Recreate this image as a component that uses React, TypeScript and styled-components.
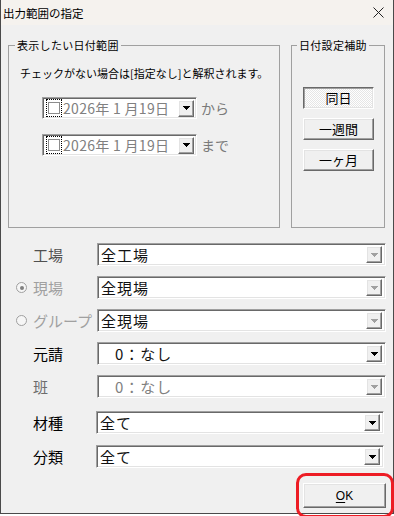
import React from "react";
import styled, { createGlobalStyle, css } from "styled-components";

const GlobalStyle = createGlobalStyle`
  html, body { margin: 0; padding: 0; background: #ffffff; }
  body { font-family: "Noto Sans CJK JP", "Noto Sans", sans-serif; color: #000; }
  * { box-sizing: border-box; }
`;

const Stage = styled.div`
  position: relative;
  width: 394px;
  height: 516px;
  overflow: hidden;
`;

const Window = styled.div`
  width: 394px;
  height: 514px;
  display: flex;
  flex-direction: column;
  border: 1px solid #4a4a4a;
  border-top: none;
  background: #f0f0f0;
`;

const TitleBar = styled.div`
  height: 25px;
  flex: none;
  display: flex;
  align-items: center;
  justify-content: space-between;
  padding: 0 9px 0 2px;
  background: #f5f2ee;
`;

const Title = styled.span`
  font-size: 11.5px;
  line-height: 16px;
  color: #000;
`;

const CloseIcon = styled.svg`
  width: 11px;
  height: 11px;
  display: block;
`;

const Body = styled.div`
  flex: 1;
  display: flex;
  flex-direction: column;
  padding-top: 12px;
`;

const GroupsRow = styled.div`
  display: flex;
  gap: 11px;
  padding-left: 7px;
`;

const GroupBox = styled.fieldset<{ $width: number }>`
  margin: 0;
  padding: 0;
  min-width: 0;
  width: ${(p) => p.$width}px;
  height: 191px;
  border: 1px solid #a0a0a0;
`;

const Legend = styled.legend<{ $offset: number }>`
  margin-left: ${(p) => p.$offset}px;
  padding: 0 2px;
  font-size: 11px;
  line-height: 17px;
  letter-spacing: 0.3px;
  color: #000;
`;

const DateGroupContent = styled.div`
  display: flex;
  flex-direction: column;
  padding: 11px 0 0 11px;
`;

const Note = styled.div`
  font-size: 11px;
  line-height: 16px;
  white-space: nowrap;
`;

const DateList = styled.div`
  display: flex;
  flex-direction: column;
  gap: 15px;
  margin: 16px 0 0 22px;
`;

const DateRow = styled.div`
  display: flex;
  align-items: center;
  gap: 4px;
`;

const sunken = css`
  border: 1px solid;
  border-color: #a0a0a0 #ffffff #ffffff #a0a0a0;
  box-shadow: inset 1px 1px #696969, inset -1px -1px #e3e3e3;
`;

const raised = css`
  border: 1px solid;
  border-color: #ffffff #696969 #696969 #ffffff;
  box-shadow: inset -1px -1px #a0a0a0, inset 1px 1px #e3e3e3;
`;

const DatePicker = styled.div`
  ${sunken};
  width: 155px;
  height: 22px;
  background: #ffffff;
  display: flex;
  align-items: center;
  padding: 0 2px 0 2px;
`;

const FocusBox = styled.span`
  width: 16px;
  height: 18px;
  margin-left: 1px;
  border: 1px dotted #000;
  display: flex;
  align-items: center;
  justify-content: center;
  flex: none;
`;

const CheckSquare = styled.span`
  width: 12px;
  height: 12px;
  border: 1px solid #8c8c8c;
  background: #ffffff;
`;

const DateText = styled.span`
  flex: 1;
  margin-left: 1px;
  font-size: 14px;
  line-height: 18px;
  letter-spacing: 0.3px;
  color: #808080;
  white-space: pre;
`;

const Suffix = styled.span`
  font-size: 14px;
  line-height: 18px;
  color: #7a7a7a;
`;

const DropButton = styled.span`
  ${raised};
  width: 16px;
  height: 17px;
  flex: none;
  background: #f0f0f0;
  display: flex;
  align-items: center;
  justify-content: center;
`;

const ArrowSvg = styled.svg`
  width: 7px;
  height: 4px;
  display: block;
`;

const AssistContent = styled.div`
  display: flex;
  flex-direction: column;
  gap: 9px;
  padding: 33px 0 0 11px;
`;

const AssistButton = styled.div<{ $pressed?: boolean }>`
  width: 71px;
  height: 22px;
  display: flex;
  align-items: center;
  justify-content: center;
  font-size: 13px;
  line-height: 16px;
  color: #000;
  ${(p) =>
    p.$pressed
      ? css`
          border: 1px solid;
          border-color: #696969 #ffffff #ffffff #696969;
          box-shadow: inset 1px 1px #a0a0a0, inset -1px -1px #e3e3e3;
          background-color: #ffffff;
          background-image: conic-gradient(#ffffff 25%, #e6e6e6 0 50%, #ffffff 0 75%, #e6e6e6 0);
          background-size: 2px 2px;
        `
      : css`
          ${raised};
          background: #f0f0f0;
        `}
`;

const Fields = styled.div`
  display: flex;
  flex-direction: column;
  margin-top: 15px;
`;

const FieldRow = styled.div<{ $mt: number; $right: number }>`
  display: flex;
  align-items: center;
  margin-top: ${(p) => p.$mt}px;
  padding-right: ${(p) => p.$right}px;
`;

type Tone = "normal" | "muted" | "dim" | "faint";
const toneColor: Record<Tone, string> = {
  normal: "#000000",
  muted: "#505050",
  dim: "#6d6d6d",
  faint: "#a0a0a0",
};

const LabelCell = styled.div<{ $width: number }>`
  width: ${(p) => p.$width}px;
  flex: none;
  display: flex;
  align-items: center;
  padding-left: 15px;
`;

const RadioSlot = styled.span`
  width: 12px;
  margin-right: 5px;
  display: flex;
  align-items: center;
  flex: none;
`;

const Radio = styled.span<{ $checked?: boolean }>`
  width: 11px;
  height: 11px;
  border-radius: 50%;
  border: 1px solid #a0a0a0;
  background: #f6f6f6;
  display: flex;
  align-items: center;
  justify-content: center;
  &::after {
    content: "";
    width: 4px;
    height: 4px;
    border-radius: 50%;
    background: #808080;
    display: ${(p) => (p.$checked ? "block" : "none")};
  }
`;

const LabelText = styled.span<{ $tone: Tone }>`
  font-size: 15px;
  line-height: 20px;
  color: ${(p) => toneColor[p.$tone]};
  white-space: nowrap;
`;

const Combo = styled.div`
  ${sunken};
  flex: 1;
  height: 23px;
  background: #ffffff;
  display: flex;
  align-items: center;
  padding: 0 3px 0 2px;
`;

const ComboText = styled.span<{ $indent: number; $dim?: boolean }>`
  flex: 1;
  padding-left: ${(p) => p.$indent}px;
  font-size: 15px;
  line-height: 19px;
  letter-spacing: 1px;
  color: ${(p) => (p.$dim ? "#808080" : "#111111")};
  white-space: pre;
`;

const Footer = styled.div`
  display: flex;
  justify-content: flex-end;
  margin-top: 15px;
  padding-right: 7px;
`;

const OkButton = styled.div`
  ${raised};
  width: 83px;
  height: 25px;
  background: #f0f0f0;
  display: flex;
  align-items: center;
  justify-content: center;
  font-family: "Liberation Sans", Arial, sans-serif;
  font-size: 12px;
  line-height: 14px;
  color: #000;
`;

const Mnemonic = styled.span`
  text-decoration: underline;
  text-underline-offset: 2px;
`;

const Highlight = styled.div`
  position: absolute;
  left: 296px;
  top: 473px;
  width: 98px;
  height: 45px;
  border: 3px solid #ed1c24;
  border-radius: 10px;
  pointer-events: none;
`;

const Arrow = ({ disabled }: { disabled?: boolean }) => (
  <ArrowSvg viewBox="0 0 7 4" shapeRendering="crispEdges">
    <polygon points="0,0 7,0 3.5,4" fill={disabled ? "#a0a0a0" : "#000000"} />
  </ArrowSvg>
);

const DateField = ({ suffix }: { suffix: string }) => (
  <DateRow>
    <DatePicker>
      <FocusBox>
        <CheckSquare />
      </FocusBox>
      <DateText>2026年 1 月19日</DateText>
      <DropButton>
        <Arrow />
      </DropButton>
    </DatePicker>
    <Suffix>{suffix}</Suffix>
  </DateRow>
);

type FieldDef = {
  label: string;
  tone: Tone;
  radio?: "on" | "off";
  value: string;
  indent: number;
  dimValue?: boolean;
  disabled: boolean;
  mt: number;
  lower?: boolean;
};

const fields: FieldDef[] = [
  { label: "工場", tone: "muted", value: "全工場", indent: 1, disabled: true, mt: 0 },
  { label: "現場", tone: "faint", radio: "on", value: "全現場", indent: 1, disabled: true, mt: 10 },
  { label: "グループ", tone: "faint", radio: "off", value: "全現場", indent: 1, disabled: true, mt: 10 },
  { label: "元請", tone: "normal", value: "0：なし", indent: 15, disabled: false, mt: 10 },
  { label: "班", tone: "dim", value: "0：なし", indent: 15, dimValue: true, disabled: true, mt: 10 },
  { label: "材種", tone: "normal", value: "全て", indent: 1, disabled: false, mt: 13, lower: true },
  { label: "分類", tone: "normal", value: "全て", indent: 1, disabled: false, mt: 11, lower: true },
];

export default function App() {
  return (
    <Stage>
      <GlobalStyle />
      <Window>
        <TitleBar>
          <Title>出力範囲の指定</Title>
          <CloseIcon viewBox="0 0 11 11">
            <path d="M0.5 0.5 L10.5 10.5 M10.5 0.5 L0.5 10.5" stroke="#222" strokeWidth="1" fill="none" />
          </CloseIcon>
        </TitleBar>
        <Body>
          <GroupsRow>
            <GroupBox $width={272}>
              <Legend $offset={6}>表示したい日付範囲</Legend>
              <DateGroupContent>
                <Note>チェックがない場合は[指定なし]と解釈されます。</Note>
                <DateList>
                  <DateField suffix="から" />
                  <DateField suffix="まで" />
                </DateList>
              </DateGroupContent>
            </GroupBox>
            <GroupBox $width={94}>
              <Legend $offset={5}>日付設定補助</Legend>
              <AssistContent>
                <AssistButton $pressed>同日</AssistButton>
                <AssistButton>一週間</AssistButton>
                <AssistButton>一ヶ月</AssistButton>
              </AssistContent>
            </GroupBox>
          </GroupsRow>
          <Fields>
            {fields.map((f) => (
              <FieldRow key={f.label} $mt={f.mt} $right={f.lower ? 9 : 7}>
                <LabelCell $width={f.lower ? 95 : 96}>
                  <RadioSlot>{f.radio && <Radio $checked={f.radio === "on"} />}</RadioSlot>
                  <LabelText $tone={f.tone}>{f.label}</LabelText>
                </LabelCell>
                <Combo>
                  <ComboText $indent={f.indent} $dim={f.dimValue}>
                    {f.value}
                  </ComboText>
                  <DropButton>
                    <Arrow disabled={f.disabled} />
                  </DropButton>
                </Combo>
              </FieldRow>
            ))}
          </Fields>
          <Footer>
            <OkButton>
              <Mnemonic>O</Mnemonic>K
            </OkButton>
          </Footer>
        </Body>
      </Window>
      <Highlight />
    </Stage>
  );
}
